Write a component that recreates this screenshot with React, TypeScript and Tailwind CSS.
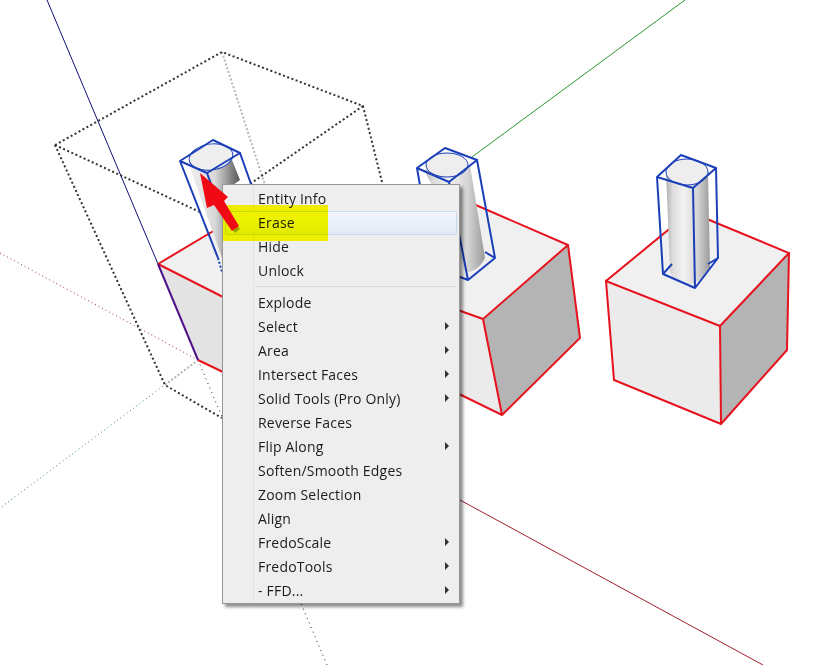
const items: { label: string; sub?: boolean; hover?: boolean }[] = [
  { label: "Entity Info" },
  { label: "Erase", hover: true },
  { label: "Hide" },
  { label: "Unlock" },
];
const items2: { label: string; sub?: boolean }[] = [
  { label: "Explode" },
  { label: "Select", sub: true },
  { label: "Area", sub: true },
  { label: "Intersect Faces", sub: true },
  { label: "Solid Tools (Pro Only)", sub: true },
  { label: "Reverse Faces" },
  { label: "Flip Along", sub: true },
  { label: "Soften/Smooth Edges" },
  { label: "Zoom Selection" },
  { label: "Align" },
  { label: "FredoScale", sub: true },
  { label: "FredoTools", sub: true },
  { label: "- FFD...", sub: true },
];

function Row({ label, sub, hover }: { label: string; sub?: boolean; hover?: boolean }) {
  return (
    <div
      className={
        hover
          ? "flex h-6 items-center justify-between rounded-[2px] border border-[#c6d9ee] bg-gradient-to-b from-[#f1f6fb] to-[#e1ebf7] pl-[32px] pr-[7px]"
          : "flex h-6 items-center justify-between pl-[33px] pr-[8px]"
      }
    >
      <span className="-translate-y-px">{label}</span>
      {sub && <span className="h-0 w-0 -translate-y-px border-y-[4px] border-l-[4px] border-y-transparent border-l-[#333333]" />}
    </div>
  );
}

function Scene() {
  const red = "#e6121e";
  const blue = "#1b3fb8";
  const dark = "#333333";
  return (
    <svg className="absolute inset-0" width="833" height="665" viewBox="0 0 833 665" fill="none">
      <defs>
        <linearGradient id="cyl" x1="0" x2="1" y1="0" y2="0">
          <stop offset="0" stopColor="#b0b0b0" />
          <stop offset="0.15" stopColor="#dcdcdc" />
          <stop offset="0.4" stopColor="#f2f2f2" />
          <stop offset="0.72" stopColor="#d4d4d4" />
          <stop offset="1" stopColor="#9a9a9a" />
        </linearGradient>
        <linearGradient id="cyl1" x1="0" x2="1" y1="0" y2="0">
          <stop offset="0" stopColor="#f0f0f0" />
          <stop offset="0.5" stopColor="#d8d8d8" />
          <stop offset="1" stopColor="#555555" />
        </linearGradient>
      </defs>

      {/* axes */}
      <path d="M47 0L158 264" stroke="#10107a" strokeWidth="1" />
      <path d="M198 360L327 665" stroke="#222" strokeWidth="1" strokeDasharray="1 4" />
      <path d="M0 253L198 360" stroke="#a03040" strokeWidth="1" strokeDasharray="1 3" />
      <path d="M460 500L763 665" stroke="#a0202c" strokeWidth="1" />
      <path d="M472 157L685 0" stroke="#2a962a" strokeWidth="1" />
      <path d="M198 360L0 508" stroke="#3a8a4a" strokeWidth="1" strokeDasharray="1 3" />

      {/* hidden group box */}
      <path d="M222 52L265 185M165 385L198 360" stroke="#b8b8b8" strokeWidth="2" strokeDasharray="2 2" />
      <path
        d="M55 145L222 52L363 106L383 186M363 106L250 184M55 145L200 212M55 145L165 385L222 418"
        stroke={dark}
        strokeWidth="2"
        strokeDasharray="2 2.5"
      />

      {/* left cube */}
      <polygon points="158,264 225,224 225,298" fill="#f0f0f0" />
      <polygon points="158,264 198,360 225,373 225,298" fill="#e3e3e3" />
      <path d="M158 264L225 224M158 264L225 298M198 360L225 373" stroke={red} strokeWidth="2" />
      <path d="M158 264L198 360" stroke="#50108a" strokeWidth="2" />

      {/* middle cube */}
      <polygon points="455,196 568,245 483,319 455,309" fill="#f0f0f0" />
      <polygon points="568,245 483,319 502,415 580,338" fill="#b4b4b4" />
      <polygon points="455,309 483,319 502,415 455,392" fill="#ebebeb" />
      <path d="M455 196L568 245L580 338L502 415L455 392M568 245L483 319L502 415M455 309L483 319" stroke={red} strokeWidth="2" />

      {/* right cube */}
      <polygon points="606,281 690,212 789,253 720,326" fill="#f0f0f0" />
      <polygon points="606,281 720,326 721,424 614,380" fill="#ebebeb" />
      <polygon points="789,253 720,326 721,424 787,350" fill="#b4b4b4" />
      <path
        d="M606 281L690 212L789 253L720 326L606 281L614 380L721 424L787 350L789 253M720 326L721 424"
        stroke={red}
        strokeWidth="2"
      />

      {/* left cylinder */}
      <path d="M190 168L222 258L226 190L240 180L232 160Z" fill="url(#cyl1)" />
      <ellipse cx="211" cy="157" rx="22" ry="13" transform="rotate(-8 211 157)" fill="#eeeeee" stroke={blue} strokeWidth="1" />
      <path
        d="M213 140L240 153L207 173L180 161ZM180 161L218 258M207 173L214 192M240 153L251 184"
        stroke={blue}
        strokeWidth="2"
        strokeLinejoin="round"
      />
      <path d="M218 258L222 272" stroke={blue} strokeWidth="2" strokeDasharray="2 2" />

      {/* middle cylinder */}
      <path d="M424 170L470 165L485 258Q478 272 465 272L440 200Z" fill="url(#cyl)" />
      <ellipse cx="447" cy="165" rx="21" ry="12" fill="#eeeeee" stroke={blue} strokeWidth="1" />
      <path
        d="M445 148L477 160L449 182L417 168ZM417 168L425 215M477 160L495 258L468 280L455 275M495 258L485 252M449 182L468 280"
        stroke={blue}
        strokeWidth="2"
        strokeLinejoin="round"
      />

      {/* right cylinder */}
      <path d="M666 172L708 172L710 268Q700 284 688 284Q672 282 670 270Z" fill="url(#cyl)" />
      <ellipse cx="687" cy="172" rx="21" ry="13" fill="#eeeeee" stroke={blue} strokeWidth="1" />
      <path
        d="M681 155L716 168L693 188L657 177ZM657 177L663 274L695 288L718 258L716 168M693 188L695 288M663 274L672 264M718 258L708 264"
        stroke={blue}
        strokeWidth="2"
        strokeLinejoin="round"
      />
    </svg>
  );
}

export default function App() {
  return (
    <div className="relative h-[665px] w-[833px] overflow-hidden bg-white">
      <Scene />

      {/* context menu */}
      <div className="absolute left-[222px] top-[184px] h-[420px] w-[238px] border border-[#979797] bg-[#eeeeee] px-[2px] pt-[2px] font-['Open_Sans',sans-serif] text-[14px] tracking-[0.2px] text-[#1c1c1c] shadow-[3px_3px_3px_rgba(0,0,0,0.45)]">
        <div className="absolute bottom-0 left-[30px] top-0 w-px bg-[#e2e2e2]" />
        <div className="relative">
          {items.map((it) => (
            <Row key={it.label} {...it} />
          ))}
          <div className="ml-[30px] mr-[1px] flex h-2 items-center">
            <div className="h-[2px] w-full border-t border-[#d8d8d8]" />
          </div>
          {items2.map((it) => (
            <Row key={it.label} {...it} />
          ))}
        </div>
      </div>

      {/* yellow highlighter */}
      <div className="absolute left-[223px] top-[205px] h-9 w-[105px] bg-[#eef200] mix-blend-darken" />

      {/* red arrow */}
      <svg className="absolute inset-0" width="833" height="665" viewBox="0 0 833 665">
        <polygon points="224,208 240,229 235,233 219,210" fill="#000000" opacity="0.3" />
        <polygon points="200,173 228,197 224,201 239,226 232,231 214,205 207,208" fill="#f00a14" />
      </svg>
    </div>
  );
}
